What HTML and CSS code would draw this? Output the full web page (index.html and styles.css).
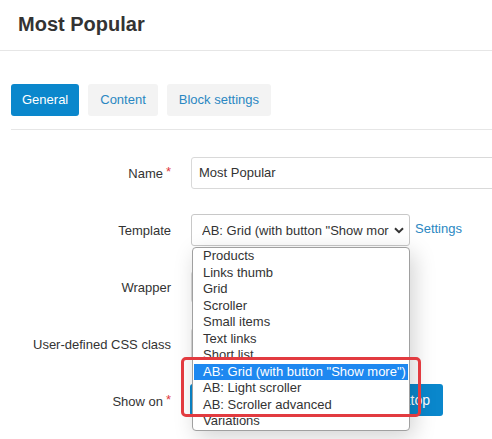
FILE: index.html
```html
<!DOCTYPE html>
<html>
<head>
<meta charset="utf-8">
<link rel="stylesheet" href="styles.css">
</head>
<body>
<div class="page">
<div class="header"><h1 class="title">Most Popular</h1></div>
<div class="content">
  <div class="tabs">
    <span class="tab tab-active">General</span>
    <span class="tab">Content</span>
    <span class="tab">Block settings</span>
  </div>
  <div class="form">
    <div class="row">
      <div class="label">Name<span class="req">*</span></div>
      <div class="control"><div class="input input-wide">Most Popular</div></div>
    </div>
    <div class="row">
      <div class="label">Template<span class="req-space"></span></div>
      <div class="control">
        <div class="select-wrap">
          <div class="select">
            <span class="select-text">AB: Grid (with button "Show more")</span>
            <svg class="chev" width="10" height="7" viewBox="0 0 10 7"><path d="M1 1.2 L5 5.2 L9 1.2" fill="none" stroke="#333" stroke-width="2"/></svg>
          </div>
          <div class="dropdown">
            <div class="opt">Products</div>
            <div class="opt">Links thumb</div>
            <div class="opt">Grid</div>
            <div class="opt">Scroller</div>
            <div class="opt">Small items</div>
            <div class="opt">Text links</div>
            <div class="opt">Short list</div>
            <div class="opt opt-sel">AB: Grid (with button "Show more")</div>
            <div class="opt">AB: Light scroller</div>
            <div class="opt">AB: Scroller advanced</div>
            <div class="opt">Variations</div>
            <div class="mark"></div>
          </div>
        </div>
        <a class="link">Settings</a>
      </div>
    </div>
    <div class="row">
      <div class="label">Wrapper<span class="req-space"></span></div>
      <div class="control"><div class="input input-mid"></div></div>
    </div>
    <div class="row">
      <div class="label">User-defined CSS class<span class="req-space"></span></div>
      <div class="control"><div class="input input-mid"></div></div>
    </div>
    <div class="row">
      <div class="label">Show on<span class="req">*</span></div>
      <div class="control"><div class="btn-blue">Phone Tablet Desktop</div></div>
    </div>
  </div>
</div>
</div>
</body>
</html>
```
FILE: styles.css
```css
* { box-sizing: border-box; }
html, body {
  margin: 0;
  background: #fff;
}
body {
  font-family: "Liberation Sans", Arial, sans-serif;
  color: #333;
  font-size: 13px;
  overflow: hidden;
}
.page {
  width: 492px;
  height: 439px;
  overflow: hidden;
}
.header {
  height: 51px;
  border-bottom: 1px solid #e6e6e6;
  padding: 12px 18px 0;
}
.title {
  margin: 0;
  font-size: 20px;
  font-weight: bold;
  color: #333;
  line-height: 24px;
}
.content {
  padding-left: 11px;
}
.tabs {
  margin-top: 33px;
  display: flex;
  gap: 9px;
  padding-bottom: 13px;
  border-bottom: 1px solid #e6e6e6;
}
.tab {
  display: inline-block;
  height: 32px;
  line-height: 32px;
  padding: 0 12px;
  background: #f3f3f3;
  color: #2a87c2;
  border-radius: 3px;
}
.tab-active {
  background: #0a87cc;
  color: #fff;
  padding: 0 11px;
}
.form {
  margin-top: 27px;
  display: flex;
  flex-direction: column;
  gap: 25px;
}
.row {
  display: flex;
  align-items: center;
  height: 32px;
}
.label {
  flex: 0 0 160px;
  width: 160px;
  text-align: right;
  margin-right: 20px;
  white-space: nowrap;
}
.req {
  color: #e0393e;
  display: inline-block;
  width: 8px;
  text-align: right;
  position: relative;
  top: -2px;
}
.req-space { display: inline-block; width: 0; }
.control {
  display: flex;
  align-items: center;
  gap: 5px;
  flex-shrink: 0;
}
.input {
  height: 32px;
  border: 1px solid #d9d9d9;
  border-radius: 3px;
  line-height: 30px;
  padding: 0 7px;
  color: #333;
}
.input-wide { width: 340px; }
.input-mid { width: 219px; }
.select-wrap {
  position: relative;
}
.select {
  width: 219px;
  height: 32px;
  border: 1px solid #c8c8c8;
  border-radius: 3px;
  display: flex;
  align-items: center;
  padding: 0 5px 0 10px;
}
.select-text {
  flex: 1;
  white-space: nowrap;
  overflow: hidden;
  color: #333;
}
.chev { margin-left: 5px; margin-top: 1px; }
.link {
  color: #2a87c2;
  position: relative;
  top: -2px;
}
.dropdown {
  position: absolute;
  top: 33px;
  left: 1px;
  width: 218px;
  padding: 0 0 0 1px;
  background: #fff;
  border: 1px solid #a0a0a0;
  border-radius: 4px;
  box-shadow: 4px 6px 22px rgba(0, 0, 0, 0.18);
  z-index: 10;
}
.opt {
  height: 16.5px;
  line-height: 16px;
  padding-left: 9px;
  white-space: nowrap;
  color: #333;
  font-size: 13px;
}
.opt-sel {
  background: #1e88f0;
  color: #fff;
  margin-right: 1px;
}
.mark {
  position: absolute;
  left: -12px;
  top: 109px;
  width: 240px;
  height: 60px;
  border: 3px solid #e23b40;
  border-radius: 5px;
}
.btn-blue {
  height: 32px;
  width: 253px;
  margin-left: -1px;
  margin-top: -2px;
  background: #0a87cc;
  color: #fff;
  border-radius: 3px;
  line-height: 32px;
  text-align: right;
  padding-right: 13px;
  font-size: 14px;
}
```
